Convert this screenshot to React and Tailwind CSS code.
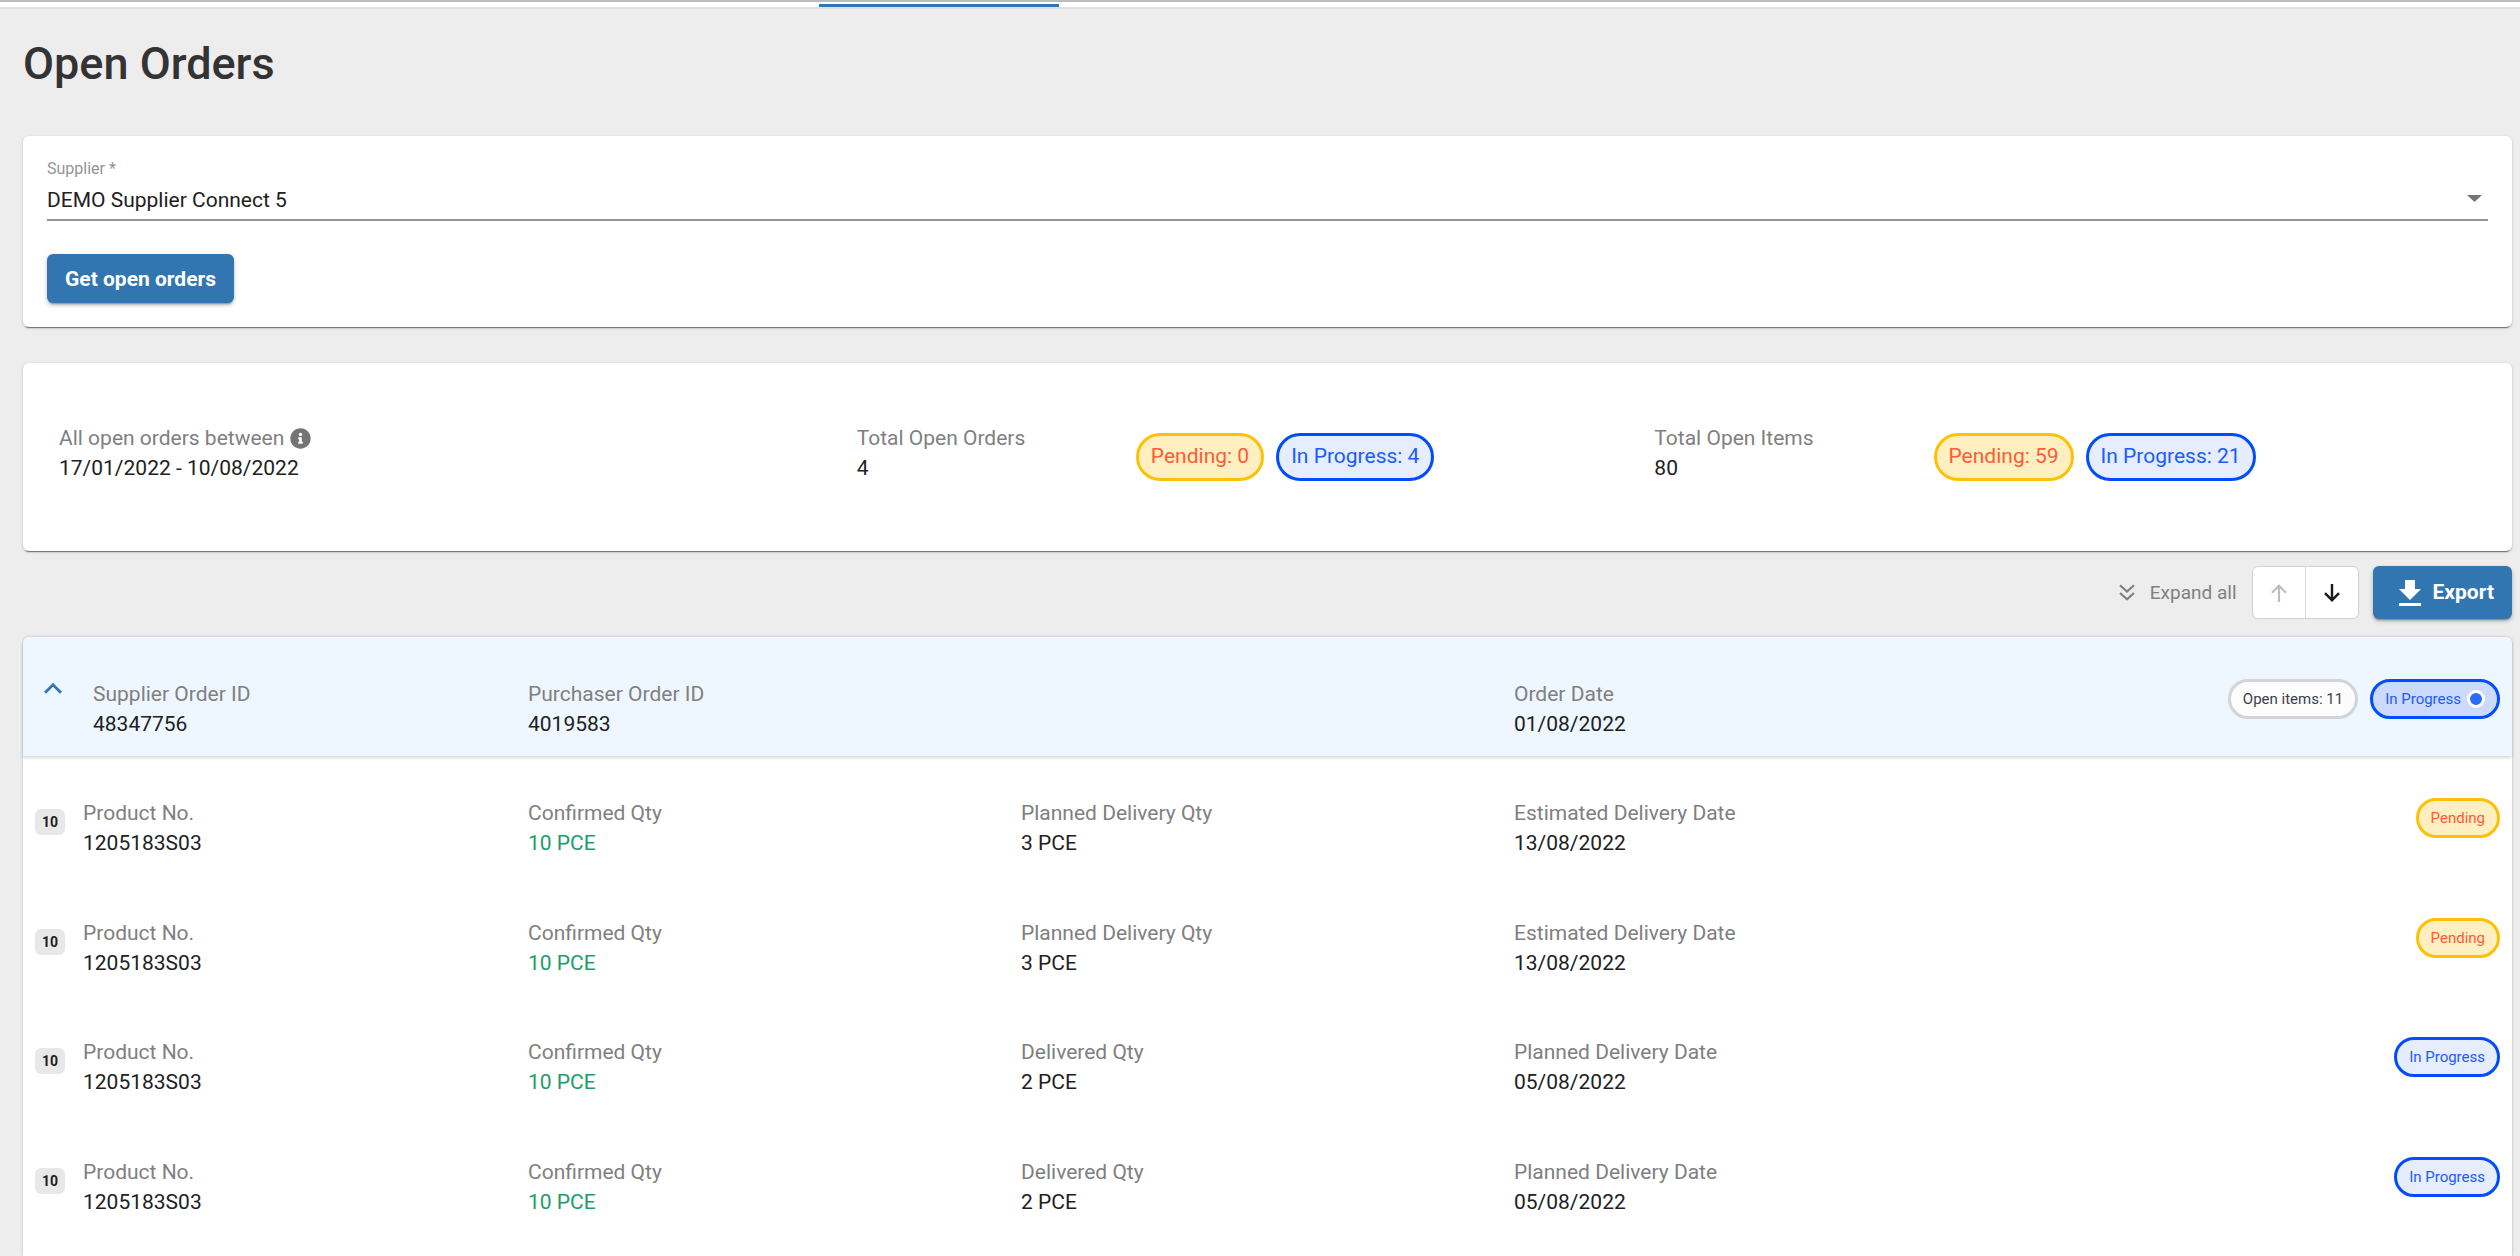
import React from "react";

const items = [
  { position: 10, qtyLabel: "Planned Delivery Qty", qty: "3 PCE", dateLabel: "Estimated Delivery Date", date: "13/08/2022", status: "Pending" },
  { position: 10, qtyLabel: "Planned Delivery Qty", qty: "3 PCE", dateLabel: "Estimated Delivery Date", date: "13/08/2022", status: "Pending" },
  { position: 10, qtyLabel: "Delivered Qty", qty: "2 PCE", dateLabel: "Planned Delivery Date", date: "05/08/2022", status: "In Progress" },
  { position: 10, qtyLabel: "Delivered Qty", qty: "2 PCE", dateLabel: "Planned Delivery Date", date: "05/08/2022", status: "In Progress" },
];

const cardShadow =
  "shadow-[0_3px_1px_-2px_rgba(0,0,0,0.45),0_1px_3px_rgba(0,0,0,0.22)]";
const buttonShadow =
  "shadow-[0_3px_2px_-2px_rgba(0,0,0,0.3),0_2px_4px_rgba(0,0,0,0.25)]";

const tones = {
  Pending: "border-[#ffc107] bg-[#ffefc1] text-[#ff5c35]",
  "In Progress": "border-[#004dff] bg-[#e5edff] text-[#1a5cff]",
  neutral: "border-[#d3d4d8] bg-[#fcfcfd] text-[#3b3f4c]",
  active: "border-[#004dff] bg-[#ccdaff] text-[#1a5cff]",
};

function Pill({ tone, large, children }) {
  return (
    <span
      className={
        "inline-flex items-center whitespace-nowrap border-3 px-3 " +
        (large ? "h-12 rounded-[24px] text-[21px] " : "h-10 rounded-[20px] text-[15px] ") +
        tones[tone]
      }
    >
      {children}
    </span>
  );
}

function Field({ label, value, green, children }) {
  return (
    <dl className="text-[21px] leading-[30px]">
      <dt className="flex items-center gap-1.5 text-[#808080]">
        {label}
        {children}
      </dt>
      <dd className={green ? "text-[#1b9e6b]" : "text-[#212121]"}>{value}</dd>
    </dl>
  );
}

function InfoIcon() {
  return (
    <svg viewBox="0 0 512 512" className="size-[21px]" fill="#757575" aria-hidden="true">
      <path d="M256 8C119 8 8 119 8 256s111 248 248 248 248-111 248-248S393 8 256 8zm0 110a42 42 0 1 1 0 84 42 42 0 0 1 0-84zm56 254c0 7-5 12-12 12h-88c-7 0-12-5-12-12v-24c0-7 5-12 12-12h12v-64h-12c-7 0-12-5-12-12v-24c0-7 5-12 12-12h64c7 0 12 5 12 12v100h12c7 0 12 5 12 12v24z" />
    </svg>
  );
}

export default function App() {
  return (
    <div className="flex min-h-screen flex-col bg-[#ededed] font-['Roboto',sans-serif] text-[#212121]">
      <nav className="flex h-[9px] justify-start border-t-2 border-b-2 border-t-[#bdbdbd] border-b-[#e0e0e0] bg-white pt-0.5">
        <div className="ml-[32.5%] h-[3px] w-60 bg-[#3176b1]" />
      </nav>

      <main className="flex flex-1 flex-col pr-2 pl-[23px]">
        <h1 className="pt-[27px] pb-11 text-[45px] leading-[56px] font-medium text-[#333333]">Open Orders</h1>

        <section className={"rounded-md bg-white px-6 pt-6 pb-6 " + cardShadow}>
          <label htmlFor="supplier" className="block text-base leading-[18px] text-[#949494]">
            Supplier *
          </label>
          <div className="relative border-b-2 border-[#949494]">
            <select id="supplier" className="block h-[41px] w-full appearance-none bg-transparent pt-2 pb-1 text-[21px] leading-[29px] text-[#212121] outline-none">
              <option>DEMO Supplier Connect 5</option>
            </select>
            <svg viewBox="0 0 15 7" className="pointer-events-none absolute top-[17px] right-1.5 h-[7px] w-[15px]" fill="#757575" aria-hidden="true">
              <path d="M0 0h15L7.500 7z" />
            </svg>
          </div>
          <button type="button" className={"mt-[33px] block h-[49px] rounded-md bg-[#3176b1] px-[18px] text-[21px] leading-[50px] font-bold text-white " + buttonShadow}>
            Get open orders
          </button>
        </section>

        <section className={"mt-9 grid h-[188px] grid-cols-3 rounded-md bg-white pt-[60px] pr-[60px] pl-9 " + cardShadow}>
          <Field label="All open orders between" value="17/01/2022 - 10/08/2022">
            <InfoIcon />
          </Field>
          <div className="flex">
            <div className="w-[35%]">
              <Field label="Total Open Orders" value="4" />
            </div>
            <div className="flex gap-3 pt-2.5">
              <Pill tone="Pending" large>Pending: 0</Pill>
              <Pill tone="In Progress" large>In Progress: 4</Pill>
            </div>
          </div>
          <div className="flex">
            <div className="w-[35%]">
              <Field label="Total Open Items" value="80" />
            </div>
            <div className="flex gap-3 pt-2.5">
              <Pill tone="Pending" large>Pending: 59</Pill>
              <Pill tone="In Progress" large>In Progress: 21</Pill>
            </div>
          </div>
        </section>

        <div className="mt-[15px] flex h-[53px] items-center justify-end">
          <button type="button" className="flex items-center gap-[15px] text-[19px] leading-[30px] text-[#808080]">
            <svg viewBox="0 0 16 17" className="h-[17px] w-4" fill="none" stroke="#808080" strokeWidth="2.200" aria-hidden="true">
              <path d="M1 1.200l7 6.300 7-6.300M1 9l7 6.300L15 9" />
            </svg>
            Expand all
          </button>
          <div className="ml-[15px] flex h-[53px] divide-x divide-[#dcdcdc] rounded-md border border-[#d2d2d2] bg-white">
            <button type="button" disabled aria-label="Sort ascending" className="flex w-[53px] items-center justify-center">
              <svg viewBox="0 0 16 18" className="h-[18px] w-4" fill="none" stroke="#bdbdbd" strokeWidth="2.200" aria-hidden="true">
                <path d="M8 18V1.500M1 8.800l7-7 7 7" />
              </svg>
            </button>
            <button type="button" aria-label="Sort descending" className="flex w-[52px] items-center justify-center">
              <svg viewBox="0 0 16 18" className="h-[18px] w-4" fill="none" stroke="#1a1a1a" strokeWidth="2.400" aria-hidden="true">
                <path d="M8 0v16.500M1 9.200l7 7 7-7" />
              </svg>
            </button>
          </div>
          <button type="button" className={"ml-3.5 flex h-[53px] items-center gap-3 rounded-md bg-[#3176b1] pr-[18px] pl-[26px] text-[21px] font-bold text-white " + buttonShadow}>
            <svg viewBox="0 0 22 26" className="h-[26px] w-[22px]" fill="currentColor" aria-hidden="true">
              <path d="M6 0h10v9h6L11 20 0 9h6zM0 23h22v3H0z" />
            </svg>
            Export
          </button>
        </div>

        <section className="mt-[18px] flex-1 rounded-t-md bg-white shadow-[0_0_3px_rgba(0,0,0,0.25)]">
          <header className="grid h-[119px] grid-cols-5 rounded-t-md bg-[#eef7ff] px-3 pt-[42px] shadow-[0_2px_3px_rgba(0,0,0,0.15)]">
            <div className="flex items-start">
              <button type="button" aria-label="Collapse order" className="mr-[31px] ml-[9px] pt-1">
                <svg viewBox="0 0 18 11" className="h-[11px] w-[18px]" fill="none" stroke="#3176b1" strokeWidth="2.800" aria-hidden="true">
                  <path d="M1 9.800l8-8 8 8" />
                </svg>
              </button>
              <Field label="Supplier Order ID" value="48347756" />
            </div>
            <Field label="Purchaser Order ID" value="4019583" />
            <div className="col-start-4">
              <Field label="Order Date" value="01/08/2022" />
            </div>
            <div className="flex items-start justify-end gap-3">
              <Pill tone="neutral">Open items: 11</Pill>
              <Pill tone="active">
                In Progress
                <span className="ml-1.5 size-[18px] rounded-full border-3 border-white bg-[#2b6cff]" />
              </Pill>
            </div>
          </header>

          <ul>
            {items.map((item, i) => (
              <li key={i} className="grid h-[120px] grid-cols-5 px-3 pt-[42px] even:h-[119px]">
                <div className="flex items-start">
                  <span className="mt-[11px] mr-[18px] flex h-[26px] w-[30px] items-center justify-center rounded-md bg-[#e8e8e9] text-sm font-bold">
                    {item.position}
                  </span>
                  <Field label="Product No." value="1205183S03" />
                </div>
                <Field label="Confirmed Qty" value="10 PCE" green />
                <Field label={item.qtyLabel} value={item.qty} />
                <Field label={item.dateLabel} value={item.date} />
                <div className="flex items-start justify-end">
                  <Pill tone={item.status}>{item.status}</Pill>
                </div>
              </li>
            ))}
          </ul>
        </section>
      </main>
    </div>
  );
}
